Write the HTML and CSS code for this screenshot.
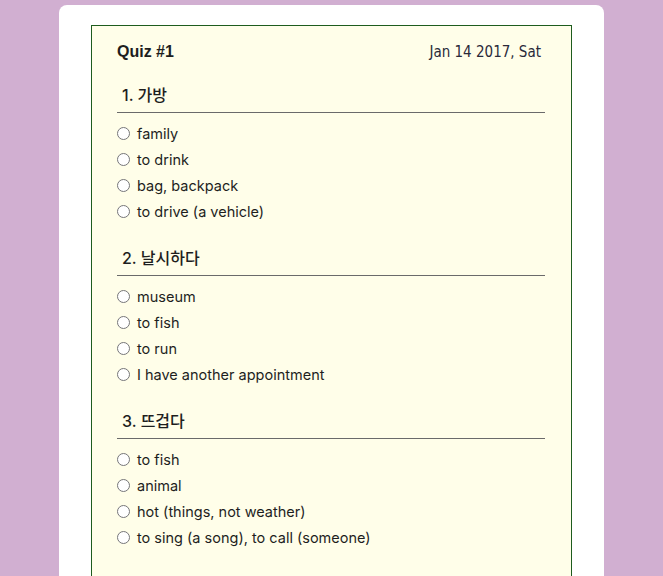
FILE: index.html
```html
<!DOCTYPE html>
<html lang="en">
<head>
<meta charset="utf-8">
<title>Quiz #1</title>
<link rel="stylesheet" href="styles.css">
</head>
<body>
<div class="card">
  <div class="quiz">
    <div class="quiz-header">
      <span class="quiz-title">Quiz #1</span>
      <span class="quiz-date">Jan 14 2017, Sat</span>
    </div>

    <div class="question">
      <h2 class="question-title">1. 가방</h2>
      <label class="option"><input type="radio" name="q1"><span>family</span></label>
      <label class="option"><input type="radio" name="q1"><span>to drink</span></label>
      <label class="option"><input type="radio" name="q1"><span>bag, backpack</span></label>
      <label class="option"><input type="radio" name="q1"><span>to drive (a vehicle)</span></label>
    </div>

    <div class="question">
      <h2 class="question-title">2. 날시하다</h2>
      <label class="option"><input type="radio" name="q2"><span>museum</span></label>
      <label class="option"><input type="radio" name="q2"><span>to fish</span></label>
      <label class="option"><input type="radio" name="q2"><span>to run</span></label>
      <label class="option"><input type="radio" name="q2"><span>I have another appointment</span></label>
    </div>

    <div class="question">
      <h2 class="question-title">3. 뜨겁다</h2>
      <label class="option"><input type="radio" name="q3"><span>to fish</span></label>
      <label class="option"><input type="radio" name="q3"><span>animal</span></label>
      <label class="option"><input type="radio" name="q3"><span>hot (things, not weather)</span></label>
      <label class="option"><input type="radio" name="q3"><span>to sing (a song), to call (someone)</span></label>
    </div>
  </div>
</div>
</body>
</html>
```

FILE: styles.css
```css
html, body {
  margin: 0;
  padding: 0;
  background: #d1afd1;
}

.card {
  width: 545px;
  height: 571px;
  box-sizing: border-box;
  margin: 5px auto 0;
  padding: 20px 32px 0;
  background: #ffffff;
  border-radius: 8px 8px 0 0;
  overflow: hidden;
}

.quiz {
  border: 1px solid #1e5c1e;
  border-bottom: none;
  background: #fffee9;
  padding: 16px 26px 0 25px;
  height: 100%;
  box-sizing: border-box;
  color: #1e1e1e;
}

.quiz-header {
  display: flex;
  justify-content: space-between;
  align-items: baseline;
  line-height: 20px;
  margin-bottom: 21px;
}

.quiz-title {
  font-family: "Liberation Sans", Arial, sans-serif;
  font-weight: bold;
  font-size: 16px;
}

.quiz-date {
  font-family: "DejaVu Sans Condensed", "DejaVu Sans", sans-serif;
  font-stretch: condensed;
  font-size: 15px;
  margin-right: 4px;
  color: #2a2a3a;
}

.question {
  display: flex;
  flex-direction: column;
  margin-bottom: 22px;
}

.question-title {
  margin: 0 0 7px;
  padding: 0 0 5px 5px;
  border-bottom: 1px solid #6a6a6a;
  font-family: "Inter", "Noto Sans CJK KR", sans-serif;
  font-weight: 500;
  font-size: 16px;
  line-height: 24px;
}

.option {
  display: flex;
  align-items: center;
  height: 26px;
  font-family: "Inter", "Noto Sans CJK KR", sans-serif;
  font-size: 14.5px;
}

.option input {
  width: 13px;
  height: 13px;
  margin: 0 7px 0 0;
}
```
